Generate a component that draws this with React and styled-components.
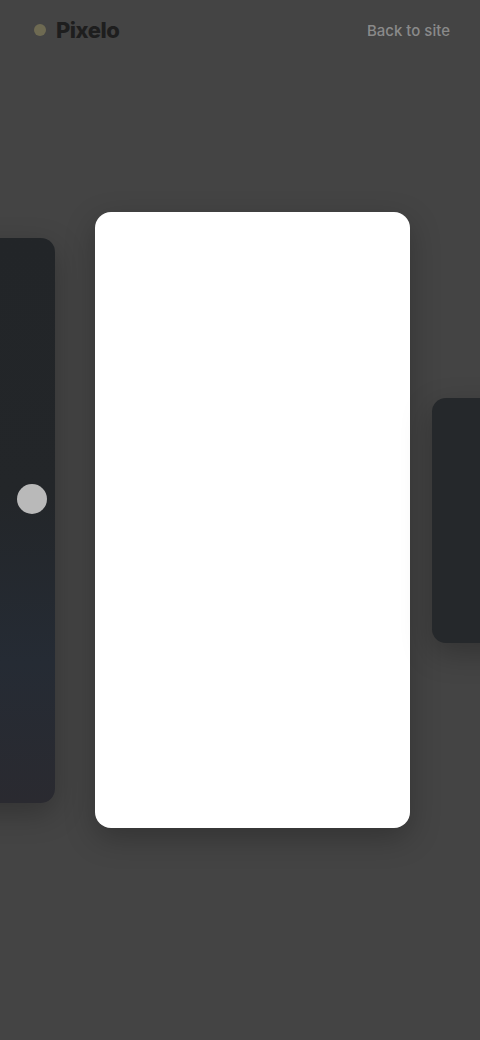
import { createGlobalStyle, styled } from "styled-components"

const Global = createGlobalStyle`
    html, body {
        margin: 0;
        padding: 0;
        background: #444444;
    }
    body {
        font-family: Inter, "Noto Sans", sans-serif;
    }
`

const Page = styled.div`
    height: 1040px;
    display: flex;
    flex-direction: column;
    background: #444444;
    overflow: hidden;
`

const Header = styled.header`
    height: 60px;
    display: flex;
    align-items: center;
    justify-content: space-between;
    padding: 0 30px 0 34px;
`

const Logo = styled.div`
    display: flex;
    align-items: center;
    gap: 10px;
`

const Dot = styled.span`
    width: 12px;
    height: 12px;
    border-radius: 50%;
    background: #6e6a52;
`

const Wordmark = styled.span`
    color: #1e1e1e;
    font-size: 22px;
    font-weight: 800;
    letter-spacing: -0.5px;
`

const TopLink = styled.a`
    color: #8a8a8a;
    font-size: 15px;
    font-weight: 500;
    text-decoration: none;
`

const Stage = styled.main`
    flex: 1;
    display: flex;
    align-items: center;
    justify-content: center;
    padding-bottom: 60px;
    overflow: hidden;
`

const Track = styled.div`
    display: flex;
    align-items: center;
    flex-shrink: 0;
`

const Slide = styled.div`
    flex-shrink: 0;
    width: ${p => p.$w}px;
    height: ${p => p.$h}px;
    margin-left: ${p => p.$gap || 0}px;
    border-radius: ${p => p.$radius || 14}px;
    background: ${p => p.$bg};
    position: relative;
    box-shadow: 0 10px 30px rgba(0, 0, 0, 0.25);
`

const Knob = styled.span`
    position: absolute;
    right: 8px;
    top: 246px;
    width: 30px;
    height: 30px;
    border-radius: 50%;
    background: #b9b9b9;
`

const App = () => {
  return (
    <>
      <Global />
      <Page>
        <Header>
          <Logo>
            <Dot />
            <Wordmark>Pixelo</Wordmark>
          </Logo>
          <TopLink href="#">Back to site</TopLink>
        </Header>
        <Stage>
          <Track>
            <Slide
              $w={207}
              $h={565}
              $bg="linear-gradient(180deg, #222528 0%, #232629 45%, #252b34 75%, #2a2a30 100%)"
            >
              <Knob />
            </Slide>
            <Slide $w={315} $h={616} $gap={40} $radius={16} $bg="#ffffff" />
            <Slide $w={200} $h={245} $gap={22} $bg="#25282b" />
          </Track>
        </Stage>
      </Page>
    </>
  )
}

export default App
